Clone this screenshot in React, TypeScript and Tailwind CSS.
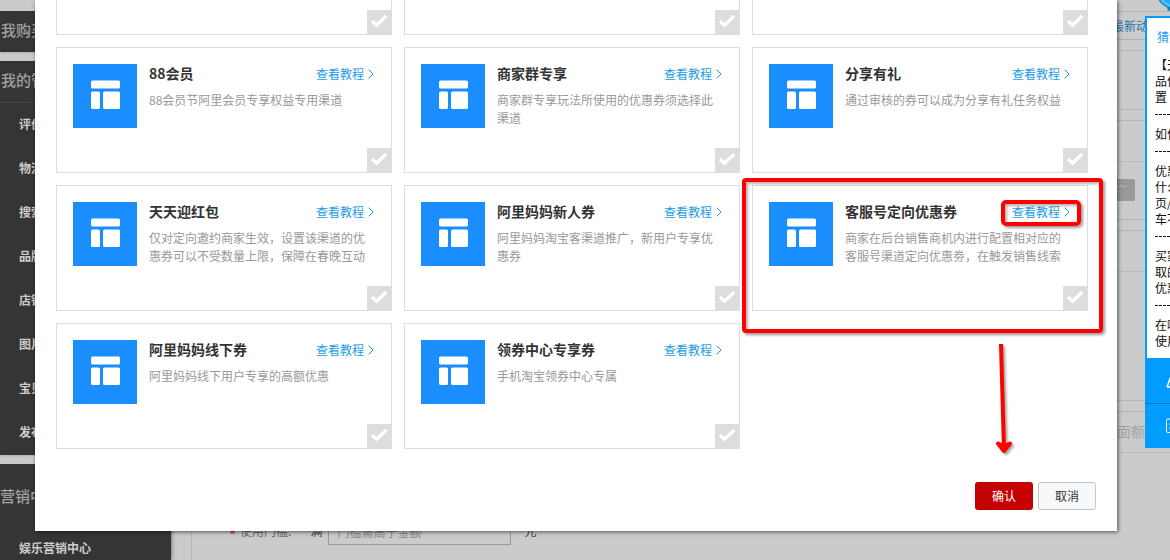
import React from "react";

type Channel = { title: string; text: string; marked?: boolean };

const channels: Channel[] = [
  { title: "88会员", text: "88会员节阿里会员专享权益专用渠道" },
  { title: "商家群专享", text: "商家群专享玩法所使用的优惠券须选择此渠道" },
  { title: "分享有礼", text: "通过审核的券可以成为分享有礼任务权益" },
  { title: "天天迎红包", text: "仅对定向邀约商家生效，设置该渠道的优惠券可以不受数量上限，保障在春晚互动" },
  { title: "阿里妈妈新人券", text: "阿里妈妈淘宝客渠道推广，新用户专享优惠券" },
  { title: "客服号定向优惠券", text: "商家在后台销售商机内进行配置相对应的客服号渠道定向优惠劵，在触发销售线索", marked: true },
  { title: "阿里妈妈线下券", text: "阿里妈妈线下用户专享的高额优惠" },
  { title: "领券中心专享券", text: "手机淘宝领券中心专属" },
];

const menu = ["评价管理", "物流管理", "搜索诊断", "品牌管理", "店铺管理", "图片管理", "宝贝管理", "发布宝贝"];

const questions = [
  ["【天猫】商", "品优惠券设", "置"],
  ["如何设置券"],
  ["优惠券为", "什么详情", "页/购物车", "车不显示"],
  ["买家已领", "取的店铺", "优惠券查询"],
  ["在哪里可", "使用优惠券"],
];

function PickBox({ label }: { label: string }) {
  return (
    <span className="absolute bottom-0 right-0 flex size-6 items-center justify-center bg-[#ddd]">
      <input type="checkbox" aria-label={label} className="absolute inset-0 size-6 appearance-none" />
      <svg viewBox="0 0 24 24" className="pointer-events-none size-6" fill="none" stroke="#fff" strokeWidth="3.2">
        <path d="M5 11 L9.5 15.2 L19.3 6" />
      </svg>
    </span>
  );
}

function ChannelCard({ item }: { item: Channel }) {
  return (
    <article className="relative flex h-[126px] gap-3 border border-[#ddd] p-4">
      <svg viewBox="0 0 64 64" className="size-16 shrink-0 bg-[#1b8eff]" fill="#fff">
        <rect x="18" y="16.5" width="29" height="8" rx="1.5" />
        <rect x="18" y="27.5" width="9" height="17.5" rx="1.5" />
        <rect x="30" y="27.5" width="17" height="17.5" rx="1.5" />
      </svg>
      <div className="min-w-0 flex-1">
        <div className="flex items-start justify-between pr-px">
          <h3 className="text-[14px] leading-[18px] font-bold text-[#333]">{item.title}</h3>
          <a href="#tutorial" className="relative flex items-center gap-1 text-[12px] leading-5 text-[#1c9be6]">
            查看教程
            <svg viewBox="0 0 6 10" className="h-[10px] w-[6px]" fill="none" stroke="currentColor">
              <path d="M0.7 0.7 L5 5 L0.7 9.3" />
            </svg>
            {item.marked && (
              <span className="pointer-events-none absolute -inset-x-[11px] -top-[2px] -bottom-[4px] rounded-[5px] border-4 border-[#f00] shadow-[2px_2px_3px_rgba(0,0,0,0.4),inset_2px_2px_3px_rgba(0,0,0,0.3)]" />
            )}
          </a>
        </div>
        <p className="mt-[7px] line-clamp-2 text-[12px] leading-[18px] text-[#999]">{item.text}</p>
      </div>
      <PickBox label={item.title} />
      {item.marked && (
        <span className="pointer-events-none absolute -top-[8px] -right-[16px] -bottom-[23px] -left-[11px] rounded-[4px] border-4 border-[#f00] shadow-[2px_2px_3px_rgba(0,0,0,0.4),inset_2px_2px_3px_rgba(0,0,0,0.3)]" />
      )}
    </article>
  );
}

function Sidebar() {
  return (
    <nav className="w-[171px] shrink-0 pt-[11px] font-bold whitespace-nowrap shadow-[0_0_5px_rgba(0,0,0,0.5)]">
      <h2 className="h-[41px] bg-[#353535] pl-px text-[15px] leading-[38px] font-medium text-[#a0a0a0] shadow">我购买的</h2>
      <section className="mt-[9px] bg-[#353535] shadow">
        <h2 className="h-[42px] border-b border-[#444] pl-px text-[15px] leading-[38px] font-medium text-[#a0a0a0]">我的管理</h2>
        <ul className="pl-[19px] text-[12px] text-[#ccc]">
          {menu.map((m) => (
            <li key={m} className="h-[44px] leading-[42px]">{m}</li>
          ))}
        </ul>
      </section>
      <section className="mt-[9px] bg-[#353535] shadow">
        <h2 className="pt-[10px] text-[15px] leading-[44px] font-medium text-[#a0a0a0]">营销中心</h2>
        <p className="pt-[8px] pl-[19px] text-[12px] leading-[44px] text-[#ccc]">娱乐营销中心</p>
      </section>
    </nav>
  );
}

function Backdrop() {
  return (
    <div className="flex h-screen overflow-hidden">
      <Sidebar />
      <main className="min-w-0 flex-1 pl-5">
        <header className="mt-[11px] flex h-[29px] items-center justify-end border-y border-[#adb5ba] pr-[10px] text-[12px] text-[#1f76a8]">
          最新动态
        </header>
        <div className="mt-[10px] h-[60px] border border-r-0 border-[#b5b5b5]" />
        <div className="mt-[10px] h-[100px] border border-r-0 border-[#b5b5b5]">
          <div className="h-[41px] border-b border-[#bababa]" />
          <div className="flex justify-end pt-[17px] pr-[35px]">
            <button type="button" className="h-[22px] w-20 rounded-[2px] bg-[#999] pr-2 text-right text-[12px] text-[#b5b5b5]">推广</button>
          </div>
        </div>
        <div className="mt-[10px] h-[171px] border border-r-0 border-[#b5b5b5]">
          <div className="h-[41px] border-b border-[#bababa]" />
        </div>
        <div className="mt-[10px] h-screen border border-r-0 border-[#b5b5b5]">
          <div className="flex h-[41px] items-center justify-end border-b border-[#bababa] pr-[25px] pb-[2px] text-[14px] text-[#a2a2a2]">面额</div>
          <div className="flex items-center pt-[64px] pl-[37px] text-[12px] text-[#444]">
            <span className="pt-[6px] text-[14px] leading-5 font-bold text-[#c33]">*</span>
            <label htmlFor="threshold" className="ml-1 text-[#666]">使用门槛:</label>
            <span className="mr-[6px] ml-[19px]">满</span>
            <input id="threshold" placeholder="门槛需高于金额" className="h-[28px] w-[183px] border border-[#9a9aa6] px-2 placeholder:text-[#888]" />
            <span className="ml-[13px]">元</span>
          </div>
        </div>
      </main>
    </div>
  );
}

function HelpWidget() {
  return (
    <aside className="absolute top-0 right-0 w-[25px] overflow-hidden">
      <svg viewBox="0 0 25 16" className="block h-4 w-[25px]">
        <circle cx="30" cy="-10" r="18.5" fill="#5cc8ff" stroke="#0a86d0" strokeWidth="1.5" />
        <circle cx="30" cy="-10" r="15.5" fill="#22aefc" />
        <circle cx="24" cy="9" r="1.8" fill="#087cc4" />
      </svg>
      <div className="h-[342px] border-t-2 border-l-2 border-[#009cff] bg-white pt-[9px] pl-[8px] text-[12px] leading-4 whitespace-nowrap text-[#111]">
        <h2 className="mb-[10px] pl-[2px] leading-5 text-[#1ba0ff]">猜您想问</h2>
        {questions.map((lines, i) => (
          <div key={i}>
            {i > 0 && <hr className="mt-[9px] mb-[11px] border-dashed border-[#111]" />}
            {lines.map((l) => (
              <p key={l}>{l}</p>
            ))}
          </div>
        ))}
      </div>
      <button type="button" aria-label="提醒" className="block h-[46px] w-full border-b border-[#0878c8] bg-[#009cff]">
        <svg viewBox="0 0 25 45" className="h-[45px] w-[25px]" fill="none" stroke="#fff" strokeWidth="1.5">
          <path d="M22 29 L26 18 M22 29 H30" />
        </svg>
      </button>
      <button type="button" aria-label="反馈" className="block h-[44px] w-full bg-[#009cff]">
        <svg viewBox="0 0 25 44" className="h-[44px] w-[25px]" fill="none" stroke="#fff">
          <path d="M30 15 H23 Q21.500 15 21.500 16.500 V27 Q21.500 28.500 23 28.500 H30 M24 20 H30 M24 24 H30" />
        </svg>
      </button>
    </aside>
  );
}

export default function App() {
  return (
    <div className="relative h-screen overflow-hidden bg-[#cbcbcb] font-['Noto_Sans_CJK_SC',sans-serif]">
      <Backdrop />
      <HelpWidget />
      <div className="absolute inset-x-0 top-0 pr-[53px] pl-[35px]">
        <div role="dialog" aria-label="选择渠道" className="bg-white pr-[29px] pb-[21px] pl-[21px] shadow-[1px_1px_4px_rgba(0,0,0,0.6)]">
          <div className="grid grid-cols-3 gap-3">
            {["渠道一", "渠道二", "渠道三"].map((l) => (
              <div key={l} className="relative h-[35px] border border-t-0 border-[#ddd]">
                <PickBox label={l} />
              </div>
            ))}
            {channels.map((c) => (
              <ChannelCard key={c.title} item={c} />
            ))}
          </div>
          <footer className="-mr-2 mt-[33px] flex justify-end gap-[5px] text-[12px]">
            <div className="relative">
              <button type="button" className="h-7 w-[58px] rounded-[3px] bg-[#c40000] text-white">确认</button>
              <svg viewBox="0 0 24 116" className="pointer-events-none absolute bottom-[50px] left-[17px] h-[116px] w-6 drop-shadow-[2px_2px_1px_rgba(0,0,0,0.35)]" fill="none" stroke="#f00" strokeWidth="4">
                <path d="M9 0 L12 106" />
                <path d="M6 99.500 L12 107 L18 99.500 L12 102 Z" fill="#f00" strokeLinejoin="round" />
              </svg>
            </div>
            <button type="button" className="h-7 w-[58px] rounded-[3px] border border-[#c4c6cf] bg-[#f7f8fa] text-[#333]">取消</button>
          </footer>
        </div>
      </div>
    </div>
  );
}
